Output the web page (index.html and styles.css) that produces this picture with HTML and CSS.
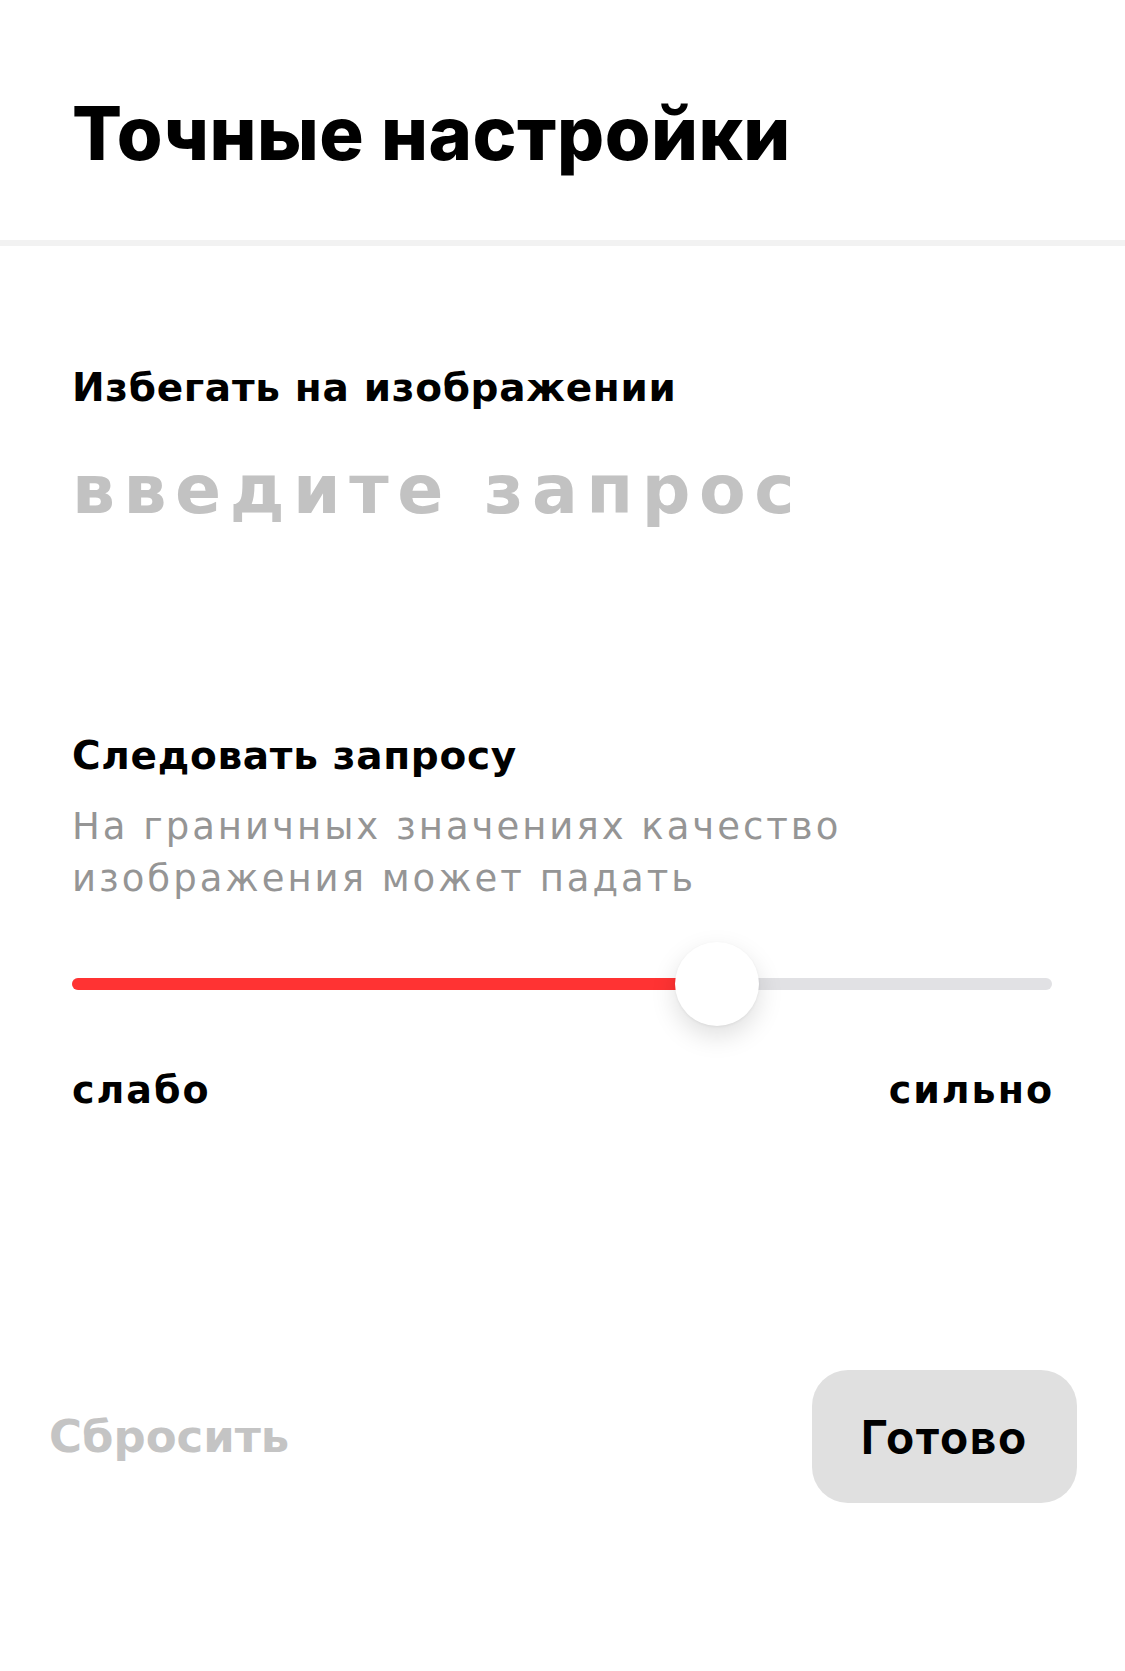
FILE: index.html
```html
<!DOCTYPE html>
<html lang="ru">
<head>
<meta charset="utf-8">
<title>Точные настройки</title>
<link rel="stylesheet" href="styles.css">
</head>
<body>
<div class="page">
  <header class="header">
    <h1 class="title">Точные настройки</h1>
  </header>
  <section class="section avoid">
    <div class="label">Избегать на изображении</div>
    <div class="placeholder">введите запрос</div>
  </section>
  <section class="section follow">
    <div class="label">Следовать запросу</div>
    <div class="desc">На граничных значениях качество<br>изображения может падать</div>
    <div class="slider">
      <div class="track">
        <div class="fill" style="width: 65.8%"></div>
      </div>
      <div class="thumb" style="left: 65.8%"></div>
    </div>
    <div class="scale">
      <span>слабо</span>
      <span class="scale-max">сильно</span>
    </div>
  </section>
  <footer class="footer">
    <button class="reset" type="button">Сбросить</button>
    <button class="done" type="button">Готово</button>
  </footer>
</div>
</body>
</html>
```
FILE: styles.css
```css
* { box-sizing: border-box; }
html, body { margin: 0; padding: 0; background: #fff; }
body {
  font-family: "DejaVu Sans", "Noto Sans", sans-serif;
  color: #000;
}
.page {
  width: 1125px;
  min-height: 1671px;
  display: flex;
  flex-direction: column;
}
.header {
  padding: 96px 72px 70px;
  border-bottom: 6px solid #f2f2f2;
}
.title {
  margin: 0;
  font-family: Inter, "Noto Sans", sans-serif;
  font-size: 74px;
  line-height: 74px;
  font-weight: 800;
  letter-spacing: 0.5px;
}
.section {
  padding: 0 73px 0 72px;
}
.avoid { padding-top: 120px; }
.follow { padding-top: 204px; }
.label {
  font-size: 39px;
  line-height: 44px;
  font-weight: 700;
  letter-spacing: 0.7px;
}
.placeholder {
  margin-top: 40px;
  font-size: 68px;
  line-height: 80px;
  font-weight: 700;
  color: #c2c2c2;
  letter-spacing: 8.5px;
}
.desc {
  margin-top: 23px;
  font-size: 37px;
  line-height: 52px;
  font-weight: 400;
  color: #959595;
  letter-spacing: 3px;
}
.slider {
  position: relative;
  margin-top: 37px;
  height: 84px;
  display: flex;
  align-items: center;
}
.track {
  flex: 1;
  height: 12px;
  border-radius: 6px;
  background: #e1e1e4;
  overflow: hidden;
}
.fill {
  height: 100%;
  background: #ff3333;
}
.thumb {
  position: absolute;
  top: 0;
  width: 84px;
  height: 84px;
  margin-left: -42px;
  border-radius: 50%;
  background: #fff;
  box-shadow: 0 10px 26px rgba(0, 0, 0, 0.13), 0 1px 3px rgba(0, 0, 0, 0.06);
}
.scale {
  margin-top: 41px;
  display: flex;
  justify-content: space-between;
  font-size: 38px;
  line-height: 46px;
  font-weight: 700;
  letter-spacing: 2px;
}
.scale-max { margin-right: -2px; }
.footer {
  margin-top: auto;
  padding: 0 48px 168px 49px;
  display: flex;
  justify-content: space-between;
  align-items: center;
}
.footer button {
  border: 0;
  cursor: pointer;
}
.reset {
  font-family: "DejaVu Sans", sans-serif;
  background: none;
  padding: 0;
  font-size: 45px;
  font-weight: 700;
  color: #c4c4c4;
}
.done {
  font-family: Inter, "Noto Sans", sans-serif;
  width: 265px;
  height: 133px;
  border-radius: 36px;
  background: #e0e0e0;
  color: #000;
  font-size: 46px;
  font-weight: 700;
  letter-spacing: 1.7px;
}
```
